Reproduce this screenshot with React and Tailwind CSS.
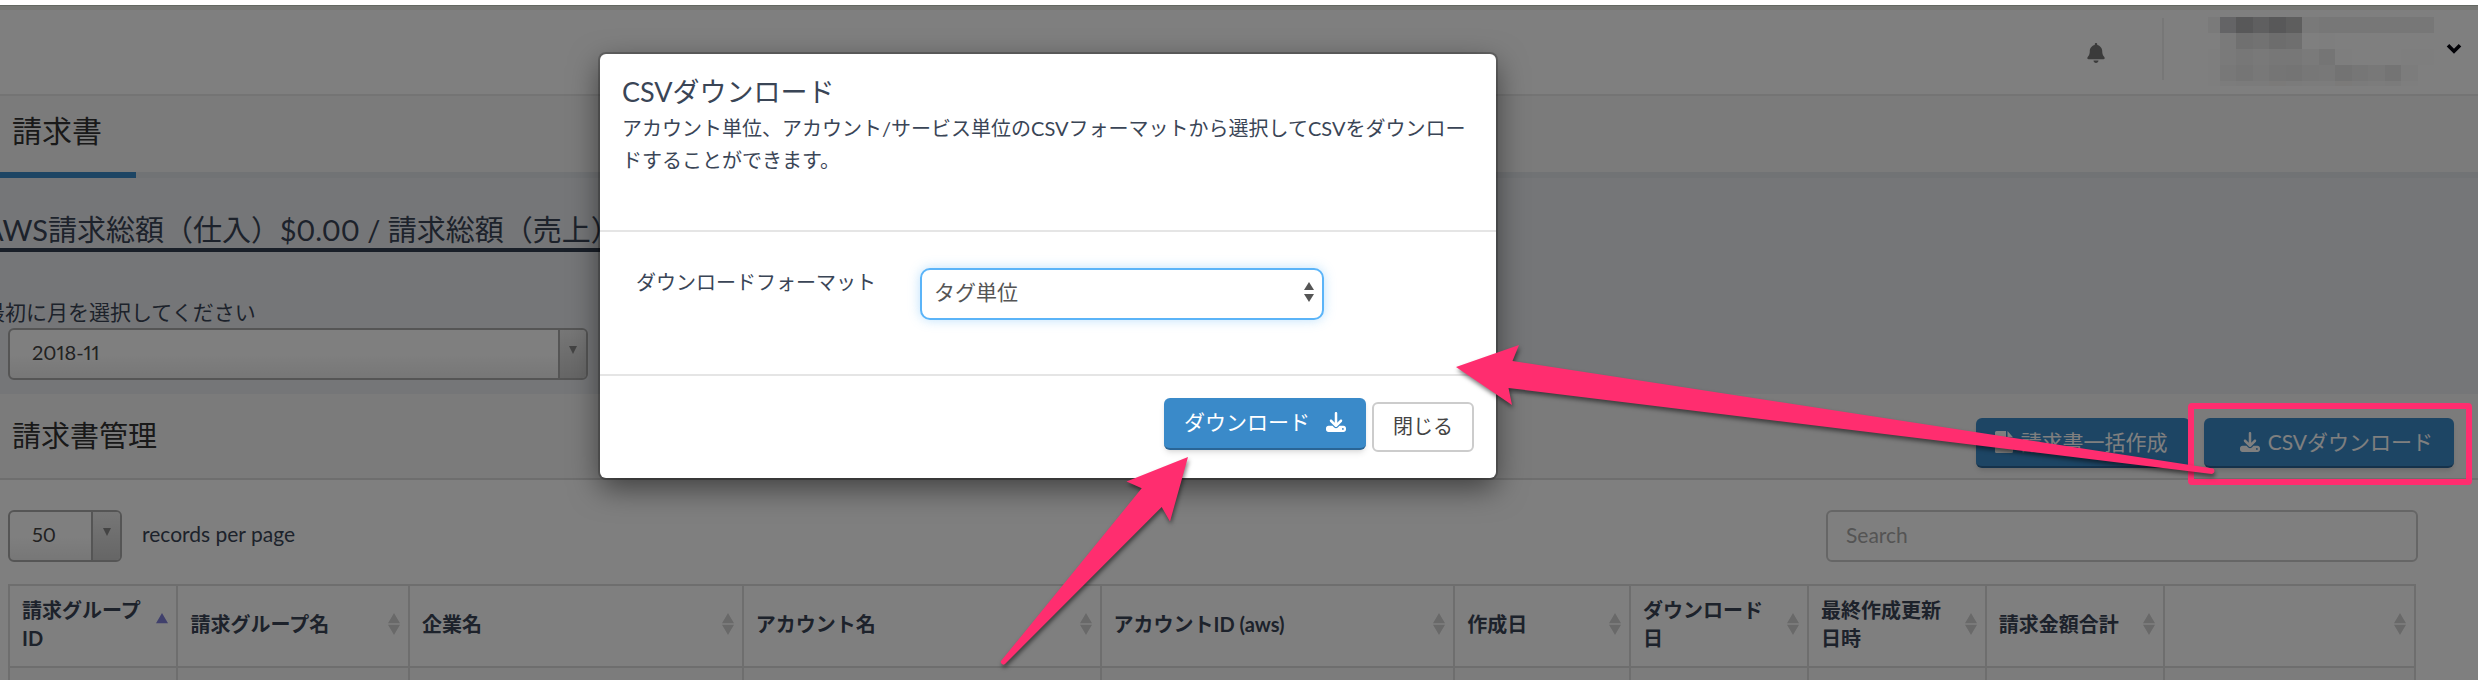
import { FaBell, FaDownload } from "react-icons/fa6";

const MOSAIC = [
  [16, "#f4f4f4,#c8c8cc,#b0b0b3,#bebec1,#b0b0b3,#bcbcbc,#f2f2f2,#efefef,#efefef,#efefef,#efefef,#efefef,#efefef,#efefef"],
  [16, "#ffffff,#f4f4f4,#e0e0e0,#e4e4e4,#dadada,#dfdfdf,#ffffff,#fdfdfd,#ffffff,#ffffff,#ffffff,#ffffff,#ffffff,#ffffff"],
  [16, "#fcfcfc,#f4f4f4,#efefef,#f2f2f2,#efefef,#efefef,#f4f4f4,#ebebeb,#fdfdfd,#ffffff,#ffffff,#ffffff,#fdfdfd,#fdfdfd"],
  [16, "#fdfdfd,#f0f0f0,#ebebeb,#f0f0f0,#ebebeb,#e8e8e8,#eeeeee,#f0f0f0,#e7e7e7,#ececec,#f0f0f0,#e8e8e8,#f8f8f8,#ffffff"],
  [5, "#fcfcfc,#f8f8f8,#f6f6f6,#f6f6f6,#f6f5f2,#f6f6f6,#f8f8f8,#f8f8f8,#f6f5f2,#f6f6f6,#f8f8f8,#f6f6f6,#fcfcfc,#ffffff"],
];

const COLUMNS = [
  ["請求グループID", "w-[7%]", true],
  ["請求グループ名", "w-[9.63%]"],
  ["企業名", "w-[13.87%]"],
  ["アカウント名", "w-[14.87%]"],
  ["アカウントID (aws)", "w-[14.7%]"],
  ["作成日", "w-[7.31%]"],
  ["ダウンロード日", "w-[7.39%]"],
  ["最終作成更新日時", "w-[7.39%]"],
  ["請求金額合計", "w-[7.39%]"],
  ["", ""],
];

function Mosaic() {
  return (
    <div className="flex w-[226px] flex-col" aria-hidden="true">
      {MOSAIC.map(([h, colors], r) => (
        <div key={r} className="flex" style={{ height: h }}>
          {colors.split(",").map((c, i) => (
            <span key={i} className={i === 0 ? "w-3" : "w-4 flex-1"} style={{ background: c }} />
          ))}
        </div>
      ))}
    </div>
  );
}

function SortMark({ active }) {
  return (
    <svg viewBox="0 0 12 22" className="h-[22px] w-3 shrink-0" aria-hidden="true">
      <path d="M6 0L12 10.300H0Z" fill={active ? "#8080d8" : "#d2d2d2"} />
      {!active && <path d="M0 11.700H12L6 22Z" fill="#d2d2d2" />}
    </svg>
  );
}

function DropSelect({ id, value, className, arrowClass }) {
  return (
    <div className={"flex h-[52px] overflow-hidden rounded-md border-2 border-[#aaa] bg-linear-to-b from-white from-50% to-[#eee] " + className}>
      <select
        id={id}
        defaultValue={value}
        className="min-w-0 flex-1 appearance-none bg-transparent px-[22px] pb-1 text-[20px] text-[#444] proportional-nums outline-none"
      >
        <option>{value}</option>
      </select>
      <span className={"pointer-events-none flex justify-center border-l-2 border-[#aaa] bg-linear-to-b from-[#eee] to-[#ccc] pt-4 " + arrowClass}>
        <svg viewBox="0 0 8 8" className="size-2" aria-hidden="true">
          <path d="M0 0H8L4 8Z" fill="#888" />
        </svg>
      </span>
    </div>
  );
}

export default function App() {
  return (
    <div className="relative h-screen overflow-hidden bg-white pt-[5px] font-['Lato','Noto_Sans_CJK_JP',sans-serif] text-[20px] text-[#3a4556]">
      <div className="border-t border-[#c9d0c5]">
        <header className="flex h-[90px] items-start justify-end border-t-4 border-b-2 border-t-[#eef0ea] border-b-[#e8e8e8] bg-white pr-4">
          <button type="button" aria-label="通知" className="mt-[33px] mr-14">
            <FaBell className="size-5 text-[#777]" />
          </button>
          <span className="mt-2 h-[62px] border-l-2 border-[#eee]" />
          <div className="mt-[7px] ml-11">
            <Mosaic />
          </div>
          <button type="button" aria-label="メニュー" className="mt-[33px] ml-3">
            <svg viewBox="0 0 16 11" className="h-[11px] w-4" aria-hidden="true">
              <path d="M2 2.200L8 8.200L14 2.200" fill="none" stroke="#05050f" strokeWidth="3.600" />
            </svg>
          </button>
        </header>

        <div className="flex h-[82px] border-b-[6px] border-[#e3e6ea] bg-[#f7f7f7]">
          <h1 className="-mb-[6px] w-[136px] border-b-[6px] border-[#3a8ac9] pt-[14px] pl-3 text-[30px] leading-10 text-[#333]">
            請求書
          </h1>
        </div>

        <div className="h-[216px] bg-[#eaecf0] pt-8">
          <h2 className="-ml-4 h-[42px] w-fit border-b-4 border-[#333f50] text-[29px] leading-10 whitespace-nowrap proportional-nums">
            AWS請求総額（仕入）$0.00 / 請求総額（売上）
          </h2>
          <label htmlFor="month" className="-ml-4 mt-11 block text-[21px] leading-8">
            最初に月を選択してください
          </label>
          <DropSelect id="month" value="2018-11" className="ml-2 w-[580px]" arrowClass="w-[28px]" />
        </div>

        <div className="flex h-[86px] items-start justify-between border-b-2 border-[#dcdcdc] bg-[#f7f7f7] pr-6">
          <h2 className="pt-[22px] pl-3 text-[29px] leading-10 text-[#333]">請求書管理</h2>
          <div className="mt-6 flex gap-[14px]">
            <button type="button" className="flex h-[50px] items-center gap-2 rounded-md border-b-2 border-[#2a6596] bg-[#3a8ac9] pr-[22px] pl-[19px] text-[21px] text-white shadow-md">
              <svg viewBox="0 0 18 22" className="h-[22px] w-[18px]" aria-hidden="true">
                <path fillRule="evenodd" d="M1.500 0H11V7.500H18V20.500Q18 22 16.500 22H1.500Q0 22 0 20.500V1.500Q0 0 1.500 0ZM12.500 0L18 6.200H12.500ZM4 11V12.500H14V11ZM4 15.500V17H14V15.500Z" fill="currentColor" />
              </svg>
              請求書一括作成
            </button>
            <button type="button" className="flex h-[50px] items-center gap-2 rounded-md border-b-2 border-[#2a6596] bg-[#3a8ac9] pr-[21px] pl-9 text-[21px] text-white shadow-md">
              <FaDownload className="size-5" />
              CSVダウンロード
            </button>
          </div>
        </div>

        <div className="flex items-center justify-between bg-white pt-[30px] pr-[60px] pl-2">
          <div className="flex items-center gap-5">
            <DropSelect id="per-page" value="50" className="w-[114px]" arrowClass="w-[29px]" />
            <label htmlFor="per-page" className="pb-1 text-[21px]">records per page</label>
          </div>
          <input
            type="search"
            aria-label="Search"
            placeholder="Search"
            className="h-[52px] w-[592px] rounded-md border-2 border-[#ccc] bg-white px-[18px] pb-1 text-[21px] placeholder:text-[#a9a9a9]"
          />
        </div>

        <div className="bg-white pt-[22px] pr-[62px] pl-2">
          <table className="w-full table-fixed border-collapse">
            <thead>
              <tr className="h-[82px]">
                {COLUMNS.map(([name, width, active], i) => (
                  <th key={i} className={"border-2 border-[#ddd] pt-[10px] pr-2 pb-[14px] pl-3 text-left leading-7 font-bold " + width}>
                    <div className="flex items-center justify-between gap-3">
                      <span>{name}</span>
                      <SortMark active={active} />
                    </div>
                  </th>
                ))}
              </tr>
            </thead>
            <tbody>
              <tr className="h-20 bg-[#f9f9f9]">
                {COLUMNS.map((c, i) => (
                  <td key={i} className="border-2 border-[#ddd]" />
                ))}
              </tr>
            </tbody>
          </table>
        </div>
      </div>

      <div className="absolute inset-x-0 top-[5px] bottom-0 bg-black/50" />

      <div className="absolute inset-x-0 top-[54px] flex justify-center pr-[382px]">
        <div role="dialog" aria-labelledby="dialog-title" className="w-[896px] rounded-md bg-white shadow-[0_10px_30px_rgba(0,0,0,0.5),0_0_0_2px_rgba(0,0,0,0.2)]">
          <div className="h-[178px] border-b-2 border-[#e5e5e5] px-[22px] pt-[18px]">
            <h2 id="dialog-title" className="text-[27px] leading-10">CSVダウンロード</h2>
            <p className="leading-8">
              アカウント単位、アカウント/サービス単位のCSVフォーマットから選択してCSVをダウンロードすることができます。
            </p>
          </div>
          <div className="flex h-36 items-start border-b-2 border-[#e5e5e5] pt-9 pl-9">
            <label htmlFor="format" className="w-[284px] leading-7">ダウンロードフォーマット</label>
            <div className="relative">
              <select
                id="format"
                defaultValue="タグ単位"
                className="h-[52px] w-[404px] appearance-none rounded-[10px] border-2 border-[#5bb4f8] bg-white px-3 pb-1 text-[21px] text-[#555] shadow-[0_0_12px_rgba(91,180,248,0.4)] outline-none"
              >
                <option>タグ単位</option>
              </select>
              <svg viewBox="0 0 10 20" className="pointer-events-none absolute top-[14px] right-[10px] h-5 w-[10px]" aria-hidden="true">
                <path d="M5 0L10 8H0ZM0 12H10L5 20Z" fill="#555" />
              </svg>
            </div>
          </div>
          <div className="flex h-[102px] items-start justify-end gap-[6px] px-[22px] pt-[22px]">
            <button type="button" className="flex h-[52px] items-center gap-4 rounded-md border-b-2 border-[#2a6596] bg-[#3a8ac9] px-5 pb-[2px] text-[21px] text-white shadow-md">
              ダウンロード
              <FaDownload className="size-5" />
            </button>
            <button type="button" className="mt-1 h-[50px] rounded-md border-2 border-[#ccc] bg-white px-[19px] pb-[2px] text-[#444]">
              閉じる
            </button>
          </div>
        </div>
      </div>

      <div className="pointer-events-none absolute top-[403px] right-[6px] h-[82px] w-[284px] rounded-sm border-[6px] border-[#ff2d6f]" />
      <svg viewBox="0 0 2478 680" className="pointer-events-none absolute top-0 right-0 h-[680px] w-[2478px] drop-shadow-[1px_3px_2px_rgba(0,0,0,0.5)]" aria-hidden="true">
        <path d="M1456 367L1519 345L1512.500 361L2213 468.500A3 3 0 0 1 2212 474L1508.500 388L1512 405Z" fill="#ff2d6f" />
        <path d="M1188 457L1126.500 481.500L1141.700 488.300L1001.800 660A2.500 2.500 0 0 0 1005 664L1161.700 507L1170 521.500Z" fill="#ff2d6f" />
      </svg>
    </div>
  );
}
